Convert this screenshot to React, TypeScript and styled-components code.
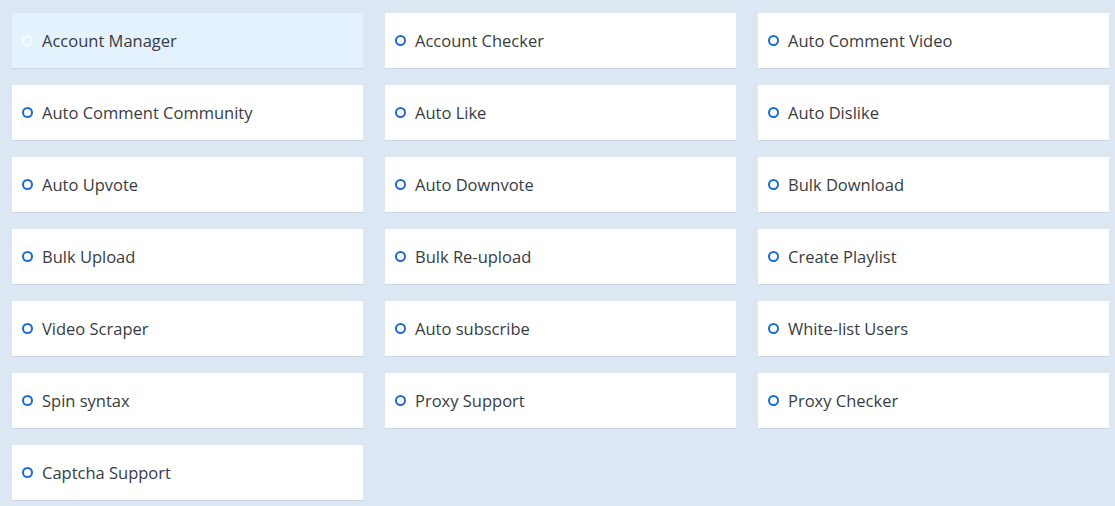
import React from "react";
import styled, { createGlobalStyle } from "styled-components";

const Global = createGlobalStyle`
  html, body { margin: 0; padding: 0; background: #dce7f3; }
  body { font-family: "Open Sans", "Noto Sans", "Liberation Sans", sans-serif; }
`;

const Grid = styled.div`
  display: grid;
  grid-template-columns: repeat(3, 1fr);
  column-gap: 22px;
  row-gap: 16px;
  padding: 13px 6px 0 12px;
`;

const Card = styled.div<{ $active?: boolean }>`
  display: flex;
  align-items: center;
  height: 56px;
  box-sizing: border-box;
  padding: 1px 0 0 10px;
  background: ${(p) => (p.$active ? "#e4f2fd" : "#ffffff")};
  border-bottom: 1px solid #c9d7e6;
  color: #383c42;
  font-size: 16.5px;
`;

const Ring = styled.span<{ $active?: boolean }>`
  width: 11px;
  height: 11px;
  box-sizing: border-box;
  border-radius: 50%;
  border: 2.5px solid ${(p) => (p.$active ? "#f5fbff" : "#1f6bcf")};
  margin: 0 9px 1px 0;
  flex: none;
`;

const Label = styled.span`
  line-height: 1;
  padding-top: 1px;
  white-space: nowrap;
`;

const items = [
  "Account Manager",
  "Account Checker",
  "Auto Comment Video",
  "Auto Comment Community",
  "Auto Like",
  "Auto Dislike",
  "Auto Upvote",
  "Auto Downvote",
  "Bulk Download",
  "Bulk Upload",
  "Bulk Re-upload",
  "Create Playlist",
  "Video Scraper",
  "Auto subscribe",
  "White-list Users",
  "Spin syntax",
  "Proxy Support",
  "Proxy Checker",
  "Captcha Support",
];

export default function App() {
  return (
    <>
      <Global />
      <Grid>
        {items.map((t, i) => (
          <Card key={t} $active={i === 0}>
            <Ring $active={i === 0} />
            <Label>{t}</Label>
          </Card>
        ))}
      </Grid>
    </>
  );
}
